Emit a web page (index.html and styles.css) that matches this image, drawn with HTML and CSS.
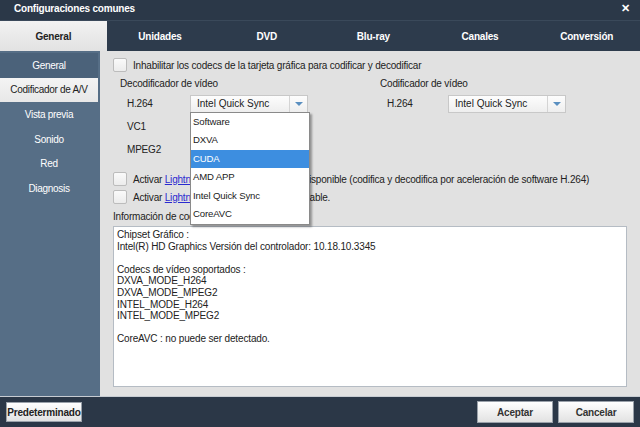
FILE: index.html
```html
<!DOCTYPE html>
<html>
<head>
<meta charset="utf-8">
<link rel="stylesheet" href="styles.css">
</head>
<body>
<div class="window">
  <div class="titlebar">
    <span class="title">Configuraciones comunes</span>
    <span class="close">✕</span>
  </div>
  <div class="tabs">
    <div class="tab active">General</div>
    <div class="tab">Unidades</div>
    <div class="tab">DVD</div>
    <div class="tab">Blu-ray</div>
    <div class="tab">Canales</div>
    <div class="tab">Conversión</div>
  </div>
  <div class="main">
    <div class="sidebar">
      <div class="side-item current">General</div>
      <div class="side-item selected">Codificador de A/V</div>
      <div class="side-item">Vista previa</div>
      <div class="side-item">Sonido</div>
      <div class="side-item">Red</div>
      <div class="side-item">Diagnosis</div>
    </div>
    <div class="content">
      <div class="check-row first">
        <span class="checkbox"></span>
        <span>Inhabilitar los codecs de la tarjeta gráfica para codificar y decodificar</span>
      </div>
      <div class="codecs">
        <div class="codec-col dec">
          <div class="col-title">Decodificador de vídeo</div>
          <div class="codec-row">
            <span class="codec-label">H.264</span>
            <div class="select-wrap">
              <div class="select"><span class="sel-text">Intel Quick Sync</span><span class="sel-arrow"></span></div>
              <ul class="dropdown">
                <li>Software</li>
                <li>DXVA</li>
                <li class="hl">CUDA</li>
                <li>AMD APP</li>
                <li>Intel Quick Sync</li>
                <li>CoreAVC</li>
              </ul>
            </div>
          </div>
          <div class="codec-row"><span class="codec-label">VC1</span></div>
          <div class="codec-row"><span class="codec-label">MPEG2</span></div>
        </div>
        <div class="codec-col enc">
          <div class="col-title">Codificador de vídeo</div>
          <div class="codec-row">
            <span class="codec-label">H.264</span>
            <div class="select"><span class="sel-text">Intel Quick Sync</span><span class="sel-arrow"></span></div>
          </div>
        </div>
      </div>
      <div class="check-row">
        <span class="checkbox"></span>
        <span>Activar <a class="link">Lightning</a> Encoding cuando esté disponible (codifica y decodifica por aceleración de software H.264)</span>
      </div>
      <div class="check-row">
        <span class="checkbox"></span>
        <span>Activar <a class="link">Lightning</a> Decoding si resulta aplicable.</span>
      </div>
      <div class="info-title">Información de codecs</div>
      <div class="info-box">
        <div>Chipset Gráfico :</div>
        <div>Intel(R) HD Graphics Versión del controlador: 10.18.10.3345</div>
        <div class="blank"></div>
        <div>Codecs de vídeo soportados :</div>
        <div>DXVA_MODE_H264</div>
        <div>DXVA_MODE_MPEG2</div>
        <div>INTEL_MODE_H264</div>
        <div>INTEL_MODE_MPEG2</div>
        <div class="blank"></div>
        <div>CoreAVC : no puede ser detectado.</div>
      </div>
    </div>
  </div>
  <div class="footer">
    <button class="btn small">Predeterminado</button>
    <div class="spacer"></div>
    <button class="btn">Aceptar</button>
    <button class="btn">Cancelar</button>
  </div>
</div>
</body>
</html>
```
FILE: styles.css
```css
* { box-sizing: border-box; }
html, body { margin: 0; padding: 0; }
body {
  font-family: "Liberation Sans", Arial, sans-serif;
  font-size: 10px;
  color: #222;
  background: #2c3949;
}
.window {
  width: 640px;
  height: 427px;
  display: flex;
  flex-direction: column;
  overflow: hidden;
}
.titlebar {
  height: 20px;
  background: #2b3848;
  display: flex;
  align-items: flex-start;
  justify-content: space-between;
  padding: 3px 10px 0 14px;
  color: #fff;
}
.title { font-weight: bold; font-size: 10px; letter-spacing: -0.2px; }
.close { font-weight: bold; font-size: 11px; color: #fff; line-height: 11px; }
.tabs {
  height: 31px;
  display: flex;
  background: #2d3b4c;
  border-top: 1px solid #3a495a;
}
.tab {
  flex: 1;
  display: flex;
  align-items: center;
  justify-content: center;
  color: #fff;
  font-weight: bold;
  font-size: 10px;
  letter-spacing: -0.2px;
}
.tab.active {
  background: linear-gradient(#f2f2f2, #e2e2e2);
  color: #222;
}
.main {
  flex: 1;
  display: flex;
  min-height: 0;
  border-bottom: 1px solid #c7ccd2;
}
.sidebar {
  width: 100px;
  background: #566e86;
  padding-top: 2px;
  display: flex;
  flex-direction: column;
}
.side-item {
  height: 24.6px;
  width: 98px;
  display: flex;
  align-items: center;
  justify-content: center;
  color: #fff;
  font-size: 10px;
  letter-spacing: -0.3px;
}
.side-item.current { background: #4b627a; }
.side-item.selected {
  background: linear-gradient(#f4f4f4, #e8e8e8);
  color: #222;
}
.content {
  flex: 1;
  background: #e1e1e1;
  padding: 6px 13px 0 13px;
  display: flex;
  flex-direction: column;
  letter-spacing: -0.2px;
}
.check-row {
  display: flex;
  align-items: center;
  gap: 6px;
  height: 18px;
  white-space: nowrap;
}
.check-row.first { height: 16px; }
.checkbox {
  width: 14px;
  height: 14px;
  border: 1px solid #bcbcbc;
  background: linear-gradient(#fafafa, #ececec);
  border-radius: 2px;
  flex: none;
}
.link { color: #2a2ad0; text-decoration: underline; }
.codecs {
  display: flex;
  padding-top: 3px;
  height: 97px;
}
.codec-col { display: flex; flex-direction: column; }
.codec-col.dec { width: 267px; padding-left: 7px; }
.col-title { height: 16px; line-height: 16px; }
.codec-row {
  display: flex;
  align-items: center;
  height: 23px;
  padding-left: 7px;
}
.codec-label { width: 63px; }
.enc .codec-label { width: 61px; }
.select-wrap { position: relative; }
.select {
  width: 118px;
  height: 18px;
  border: 1px solid #c8c8c8;
  background: linear-gradient(#fdfdfd, #eeeeee);
  display: flex;
  align-items: center;
  letter-spacing: 0;
}
.sel-text { flex: 1; padding-left: 6px; }
.sel-arrow {
  width: 18px;
  height: 100%;
  border-left: 1px solid #d4d4d4;
  position: relative;
}
.sel-arrow::after {
  content: "";
  position: absolute;
  left: 5px;
  top: 6px;
  border-left: 4px solid transparent;
  border-right: 4px solid transparent;
  border-top: 4px solid #5a8fc0;
}
.dropdown {
  position: absolute;
  top: 17px;
  left: 0;
  width: 120px;
  margin: 0;
  padding: 0;
  list-style: none;
  background: #fff;
  border: 1px solid #8a8a8a;
  box-shadow: 2px 2px 2px rgba(0,0,0,0.35);
  z-index: 5;
  font-size: 9.6px;
  letter-spacing: -0.15px;
}
.dropdown li {
  height: 18.5px;
  line-height: 18.5px;
  padding-left: 2px;
}
.dropdown li.hl { background: #3d8ee0; color: #fff; }
.info-title { height: 17px; line-height: 17px; padding-top: 2px; box-sizing: content-box; }
.info-box {
  background: #fff;
  border: 1px solid #b5bcc4;
  width: 514px;
  height: 161px;
  margin-top: 1px;
  padding: 2px 3px;
  line-height: 11.6px;
  letter-spacing: -0.15px;
}
.info-box .blank { height: 11.6px; }
.footer {
  height: 30px;
  background: #2b3747;
  display: flex;
  align-items: center;
  padding: 0 6px;
  gap: 5px;
}
.spacer { flex: 1; }
.btn {
  font-family: "Liberation Sans", Arial, sans-serif;
  width: 76px;
  height: 22px;
  border: 1px solid #9aa1aa;
  background: linear-gradient(#ffffff, #e2e2e2);
  font-size: 10px;
  font-weight: bold;
  letter-spacing: -0.2px;
  color: #333;
  padding: 0;
}
.btn.small { height: 20px; color: #222; }
```
